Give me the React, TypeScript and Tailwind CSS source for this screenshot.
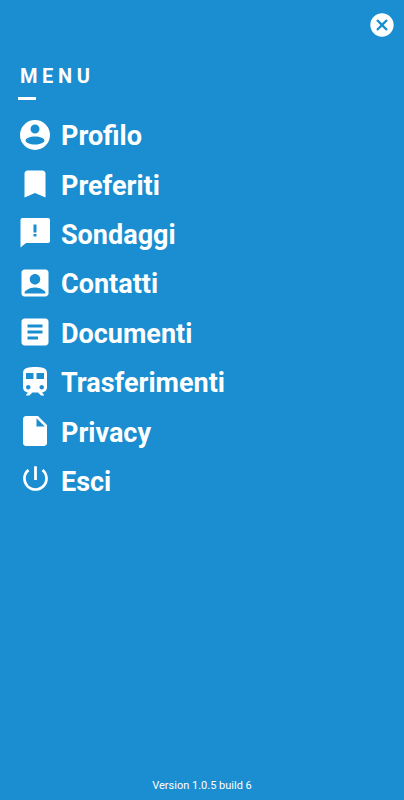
import {
  MdAccountBox,
  MdArticle,
  MdBookmark,
  MdCancel,
  MdInsertDriveFile,
  MdPowerSettingsNew,
  MdTrain,
} from 'react-icons/md'

// Cerchio con testa e corpo ritagliati
function ProfileIcon() {
  return (
    <svg viewBox="0 0 30 30" className="h-[30px] w-[30px]" fill="currentColor">
      <path
        fillRule="evenodd"
        d="M15 0a15 15 0 1 1 0 30a15 15 0 1 1 0-30zM15 4.500a4.500 4.500 0 1 0 0 9a4.500 4.500 0 1 0 0-9zM15 16.500c-5.200 0-9.500 1.800-9.500 4s4.300 4 9.500 4s9.500-1.800 9.500-4s-4.300-4-9.500-4z"
      />
    </svg>
  )
}

function SurveyIcon() {
  return (
    <svg viewBox="0 0 30 30" className="h-[30px] w-[30px]" fill="currentColor">
      <path
        fillRule="evenodd"
        d="M2 0h26a2 2 0 0 1 2 2v21a2 2 0 0 1-2 2H6l-5.500 4.500V2a2 2 0 0 1 1.500-2zM13.500 6.500v8h3v-8zM13.500 16v2.500h3V16z"
      />
    </svg>
  )
}

const menuItems = [
  { label: 'Profilo', icon: <ProfileIcon /> },
  { label: 'Preferiti', icon: <MdBookmark className="h-9 w-9" /> },
  { label: 'Sondaggi', icon: <SurveyIcon /> },
  { label: 'Contatti', icon: <MdAccountBox className="h-9 w-9" /> },
  { label: 'Documenti', icon: <MdArticle className="h-9 w-9" /> },
  { label: 'Trasferimenti', icon: <MdTrain className="h-9 w-9" /> },
  { label: 'Privacy', icon: <MdInsertDriveFile className="h-9 w-9" /> },
  { label: 'Esci', icon: <MdPowerSettingsNew className="mb-[3px] h-[33px] w-[33px]" /> },
]

export default function App() {
  return (
    <div className="flex h-[800px] w-[404px] flex-col overflow-hidden bg-[#1a8ed0] font-['Roboto',sans-serif] text-white">
      {/* Close */}
      <div className="flex justify-end pt-[11px] pr-[8px]">
        <MdCancel className="h-[28px] w-[28px]" />
      </div>

      {/* Title */}
      <div className="mt-[25px] pl-[20px] text-[20px] leading-[24px] font-bold tracking-[4.6px]">MENU</div>
      <div className="mt-[9px] ml-[18px] h-[3px] w-[18px] bg-white" />

      {/* Items */}
      <nav className="mt-[10px] flex flex-col">
        {menuItems.map(({ label, icon }) => (
          <div key={label} className="flex h-[49.4px] items-center">
            <div className="ml-[17px] flex h-9 w-9 shrink-0 items-center justify-center">{icon}</div>
            <span className="mt-[3px] ml-[8px] text-[27px] leading-[32px] font-bold">{label}</span>
          </div>
        ))}
      </nav>

      {/* Footer */}
      <div className="mt-auto pb-[6px] text-center text-[11px] leading-[16px]">Version 1.0.5 build 6</div>
    </div>
  )
}
